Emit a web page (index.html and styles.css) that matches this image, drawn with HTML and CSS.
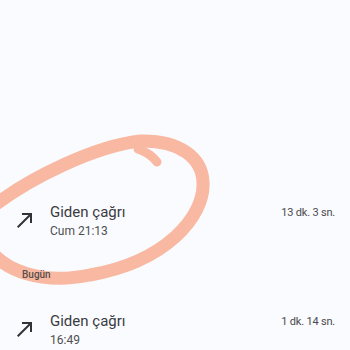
FILE: index.html
```html
<!DOCTYPE html>
<html lang="tr">
<head>
<meta charset="utf-8">
<title>Arama geçmişi</title>
<link rel="stylesheet" href="styles.css">
</head>
<body>
<main class="log">
  <div class="row">
    <svg class="call-icon" viewBox="0 0 24 24" width="24" height="24" aria-hidden="true"><path d="M9 5v2h6.59L4 18.59 5.41 20 17 8.41V15h2V5z"/></svg>
    <div class="info">
      <div class="title">Giden çağrı</div>
      <div class="sub">Cum 21:13</div>
    </div>
    <div class="dur">13 dk. 3 sn.</div>
  </div>
  <div class="section">Bugün</div>
  <div class="row">
    <svg class="call-icon" viewBox="0 0 24 24" width="24" height="24" aria-hidden="true"><path d="M9 5v2h6.59L4 18.59 5.41 20 17 8.41V15h2V5z"/></svg>
    <div class="info">
      <div class="title">Giden çağrı</div>
      <div class="sub">16:49</div>
    </div>
    <div class="dur">1 dk. 14 sn.</div>
  </div>
</main>
<svg class="mark" viewBox="0 0 350 350" width="350" height="350" aria-hidden="true">
  <path class="mark-main" d="M -5 205 C 30 178, 95 146, 140 141 C 180 140, 202 158, 203 182 C 205 217, 165 262, 90 275 C 40 285, 5 270, -10 250"/>
  <path class="mark-tail" d="M 138 149 Q 150 153 157 162"/>
</svg>
</body>
</html>
```

FILE: styles.css
```css
html, body {
  margin: 0;
  padding: 0;
}
body {
  width: 350px;
  height: 350px;
  overflow: hidden;
  background: #fafbfe;
  font-family: Roboto, "Noto Sans", "Liberation Sans", sans-serif;
  position: relative;
}
.log {
  position: relative;
  z-index: 1;
  padding-top: 202px;
}
.row {
  display: flex;
  align-items: center;
  padding: 0 15px 0 13px;
}
.call-icon {
  flex: none;
  fill: #333336;
  margin-right: 13px;
  margin-bottom: 3px;
}
.info {
  flex: 1;
  display: flex;
  flex-direction: column;
}
.title {
  font-size: 15px;
  line-height: 20px;
  color: #3b3b3e;
}
.sub {
  font-size: 12px;
  line-height: 18px;
  color: #4f4f52;
}
.dur {
  align-self: flex-start;
  font-size: 11px;
  line-height: 20px;
  letter-spacing: -0.2px;
  color: #4a4a4d;
  padding-top: 1px;
}
.section {
  margin: 28px 0 29px;
  padding-left: 22px;
  font-size: 10px;
  line-height: 14px;
  font-weight: 500;
  color: #5a4f4c;
}
.mark {
  position: absolute;
  left: 0;
  top: 0;
  z-index: 0;
  pointer-events: none;
}
.mark-main {
  fill: none;
  stroke: #f8b8a1;
  stroke-width: 13;
  stroke-linecap: round;
}
.mark-tail {
  fill: none;
  stroke: #f8b8a1;
  stroke-width: 9;
  stroke-linecap: round;
}
```
